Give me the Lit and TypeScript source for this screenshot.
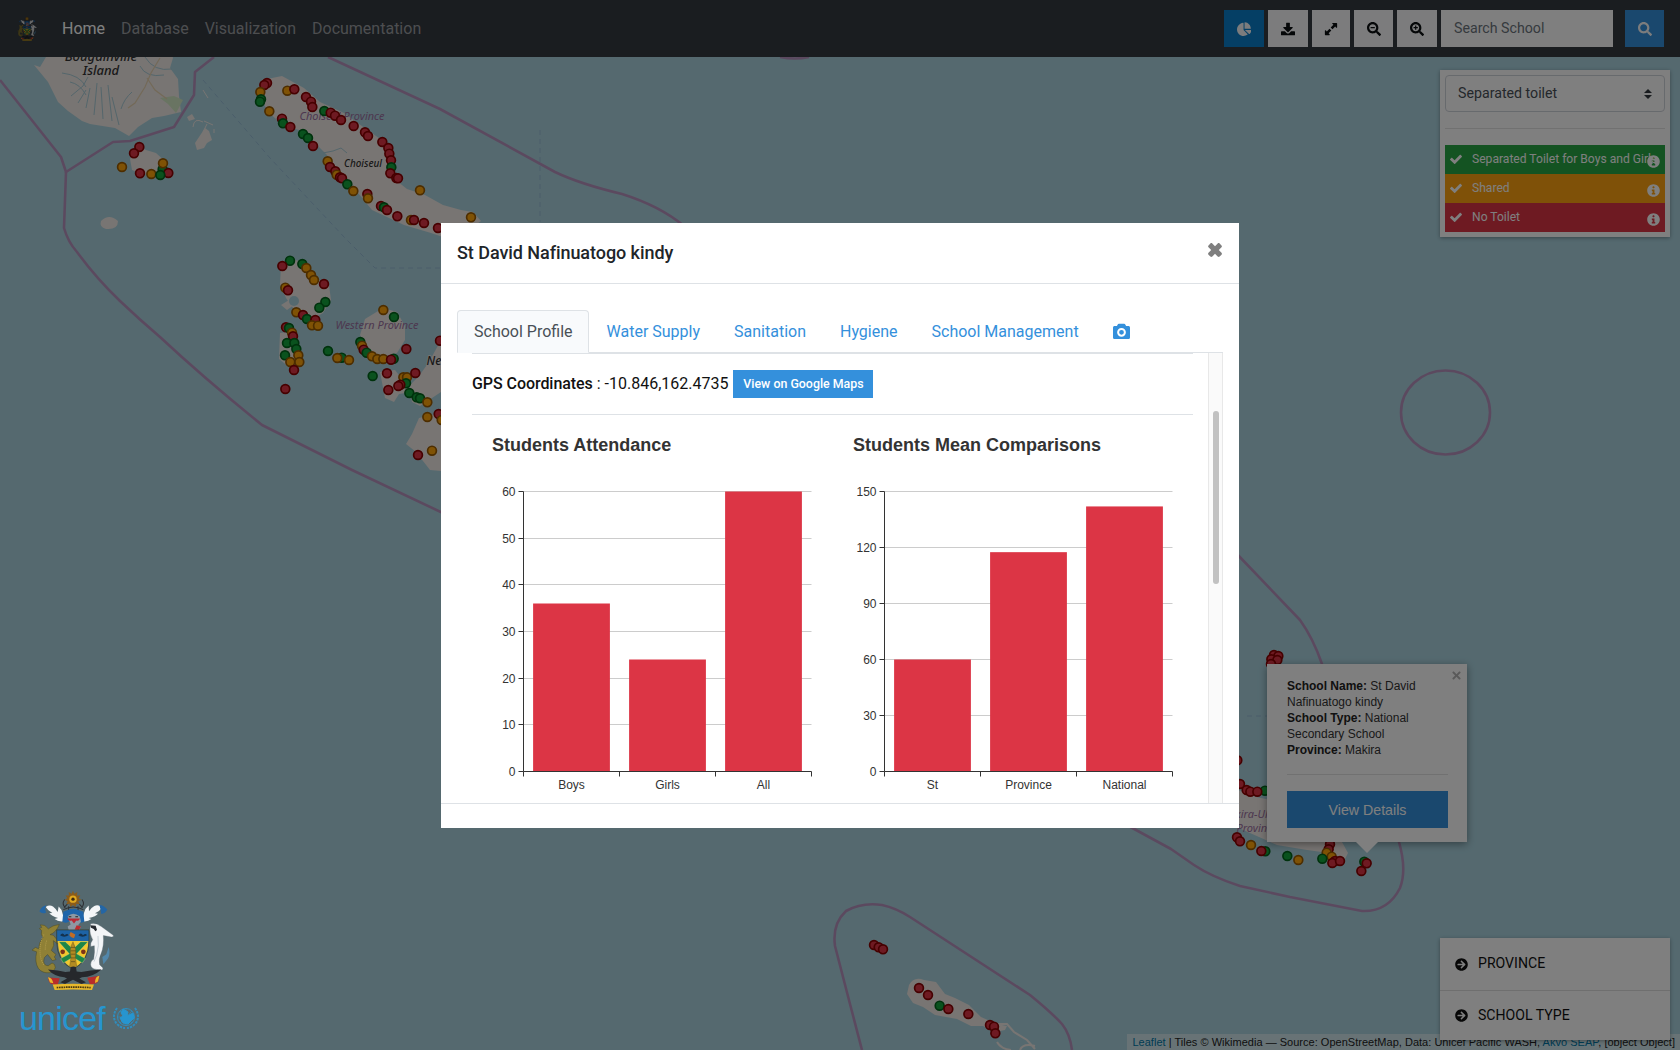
import { LitElement, html, svg, css } from "lit";
import { customElement, property } from "lit/decorators.js";

/* ---------- icons ---------- */
const SEARCH =
  "M505 442.7L405.3 343c-4.5-4.5-10.6-7-17-7H372c27.6-35.3 44-79.7 44-128C416 93.1 322.9 0 208 0S0 93.1 0 208s93.1 208 208 208c48.3 0 92.7-16.4 128-44v16.3c0 6.4 2.5 12.5 7 17l99.7 99.7c9.4 9.4 24.6 9.4 33.9 0l28.3-28.3c9.4-9.4 9.4-24.6.1-34zM208 336c-70.7 0-128-57.2-128-128 0-70.7 57.2-128 128-128 70.7 0 128 57.2 128 128 0 70.7-57.2 128-128 128z";
const ICONS: Record<string, string> = {
  search: SEARCH,
  zoomOut: SEARCH + "M130 186h156v44H130z",
  zoomIn: SEARCH + "M130 186h56v-56h44v56h56v44h-56v56h-44v-56h-56z",
  check:
    "M178 462 L10 294c-12-12-12-30 0-42l44-44c12-12 30-12 42 0L196 306 416 86c12-12 30-12 42 0l44 44c12 12 12 30 0 42L220 462c-12 12-30 12-42 0z",
  info: "M256 8C119.043 8 8 119.083 8 256c0 136.997 111.043 248 248 248s248-111.003 248-248C504 119.083 392.957 8 256 8zm0 80c23.196 0 42 18.804 42 42s-18.804 42-42 42-42-18.804-42-42 18.804-42 42-42zm68 314c0 6.627-5.373 12-12 12h-112c-6.627 0-12-5.373-12-12v-34c0-6.627 5.373-12 12-12h18v-84h-18c-6.627 0-12-5.373-12-12v-34c0-6.627 5.373-12 12-12h82c6.627 0 12 5.373 12 12v130h18c6.627 0 12 5.373 12 12v34z",
  pie: "M512 288H290.5l150 150c6.04 6.04 15.98 6.53 22.19.68 36-34 58-78 65.32-132.86 1.34-9.46-6.51-17.85-16.06-17.85zm-6-52C498 112 408.26 16 288.8 8 279.68 7.4 276 15 276 24V250h214c9.14 0 16.82-5 16-14zM240 288V44c0-9.55-8.39-17.4-17.84-16.06C100 42-4.1 155.6.14 280.37 4.5 408.51 114.83 513.59 243.03 511.98c50.4-.63 96.97-16.87 135.26-44.03 7.9-5.6 20-14 10-24L240 288z",
  download:
    "M204 24h104a16 16 0 0 1 16 16v144h84c18 0 27 21 14 34L274 366c-10 10-26 10-36 0L90 218c-13-13-4-34 14-34h84V40a16 16 0 0 1 16-16zM24 340h118l62 62c29 28 75 28 104 0l62-62h118a24 24 0 0 1 24 24v100a24 24 0 0 1-24 24H24a24 24 0 0 1-24-24V364a24 24 0 0 1 24-24z",
  expand:
    "M320 32h140c12 0 20 8 20 20v140c0 18-20 26-33 14l-38-38-98 98-66-66 98-98-37-37c-12-12-4-33 14-33zM192 480H52c-12 0-20-8-20-20V320c0-18 20-26 33-14l38 38 98-98 66 66-98 98 37 37c12 12 4 33-14 33z",
  arrow:
    "M256 8c137 0 248 111 248 248S393 504 256 504 8 393 8 256 119 8 256 8zm-28.9 143.6l75.5 72.4H120c-13.3 0-24 10.7-24 24v16c0 13.3 10.7 24 24 24h182.6l-75.5 72.4c-9.7 9.3-9.9 24.8-.4 34.3l11 10.9c9.4 9.4 24.6 9.4 33.9 0L404.3 273c9.4-9.4 9.4-24.6 0-33.9L271.6 106.3c-9.4-9.4-24.6-9.4-33.9 0l-11 10.9c-9.5 9.6-9.3 25.1.4 34.4z",
  camera:
    "M512 140v296c0 26.5-21.5 48-48 48H48c-26.5 0-48-21.5-48-48V140c0-26.5 21.5-48 48-48h70l20-42c8-16 22-26 40-26h156c18 0 32 10 40 26l20 42h70c26.500 0 48 21.500 48 48zM388 280a132 132 0 1 0-264 0a132 132 0 1 0 264 0zM328 280a72 72 0 1 1-144 0a72 72 0 1 1 144 0z",
  times:
    "M170 48 256 134 342 48c18-18 44-18 62 0l60 60c18 18 18 44 0 62L378 256l86 86c18 18 18 44 0 62l-60 60c-18 18-44 18-62 0L256 378 170 464c-18 18-44 18-62 0l-60-60c-18-18-18-44 0-62l86-86L48 170c-18-18-18-44 0-62l60-60c18-18 44-18 62 0z",
  timesThin:
    "M110 32 256 178 402 32c14-14 36-14 50 0l28 28c14 14 14 36 0 50L334 256l146 146c14 14 14 36 0 50l-28 28c-14 14-36 14-50 0L256 334 110 480c-14 14-36 14-50 0l-28-28c-14-14-14-36 0-50l146-146L32 110c-14-14-14-36 0-50l28-28c14-14 36-14 50 0z",
};
const icon = (name: string, size: number) => html`<svg
  class="icon" width=${size} height=${size} viewBox="0 0 512 512" fill="currentColor" fill-rule="evenodd"
><path d=${ICONS[name]} /></svg>`;

/* ---------- coat of arms ---------- */
@customElement("coat-of-arms")
class CoatOfArms extends LitElement {
  static styles = css`
    :host { display: block; }
    svg { display: block; width: 100%; height: 100%; }
  `;
  render() {
    return html`<svg viewBox="95 58 252 305" preserveAspectRatio="none">
      <g stroke="#2c2f33" stroke-width="3" fill="none">
        <path d="M196 92q-10 14 2 24M248 92q10 14-2 24M192 122q30-16 60 0M196 134q26-14 52 0M204 106l-10 10M240 106l10 10M208 112v20M236 112v20" />
      </g>
      <path d="M221 66l4 9 9-5-1 10 10 0-5 8 8 5-9 4 4 9-10-1-2 9-8-6-8 6-2-9-10 1 4-9-9-4 8-5-5-8 10 0-1-10 9 5z" fill="#8a5c1c" />
      <circle cx="221" cy="91" r="11" fill="#e0a81e" /><circle cx="221" cy="91" r="5" fill="#3d2b12" />
      <g fill="#f4f6f8">
        <path d="M196 156q-18 4-30-6l10-3q-20-6-26-14l9-1q-14-8-20-18 12-8 22-1 8 6 14 16l3-16q10 8 12 22z" />
        <path d="M246 156q18 4 30-6l-8-3q22-5 28-13l-9-1q14-6 22-18-12-9-24-4-10 5-16 16l-1-17q-11 8-14 22z" />
      </g>
      <path d="M141 109q-14 2-21 18 8 9 20 4l-3-12zM300 108q14 0 24 14-6 12-18 13l-2-12z" fill="#2466a5" />
      <path d="M192 128l22-8h14l24 8 3 30q-16 6-22-2h-22q-8 8-22 2z" fill="#1f65aa" />
      <path d="M205 142q16-16 36 0l4 16-9 10 8 6-4 8h-32l-3-10 9-6z" fill="#8e98a3" />
      <path d="M204 148h38q-4 10-11 6l-7 9-7-9q-9 4-13-6z" fill="#b82934" /><path d="M232 168l13 4-6 10-13-1z" fill="#bd2a2e" />
      <path d="M208 143h8M228 143h8" stroke="#202326" stroke-width="3" />
      <path d="M180 166q-21 2-33 13-10-14-24-12l4 8-7 3 7 6-1 11 5 10q-13 14-13 33l-10-4-10 8 14 5q-7 30 5 49 12 15 33 13 15-3 18-15 0-12-10-14l-11 8q-12 1-14-12-2-13 12-21l14 18 11-3-5-8 5-7-14-12q11-15 6-29l14 10 12-5-3-8-11 1-12-14-10-2q18-6 28-30z" fill="#8f8035" stroke="#4d4a24" stroke-width="1.500" />
      <path d="M134 196q-12 22-12 48 0 26 12 42M142 214q-5 14-4 30" stroke="#b09a4c" stroke-width="3" stroke-dasharray="3 3" fill="none" />
      <path d="M172 182h97v33h-97z" fill="#1d63a6" />
      <path d="M176 215h91q0 58-46 82-45-24-45-82z" fill="#f1c72e" />
      <path d="M172 182h97v33q0 60-48 84-49-24-49-84z" fill="none" stroke="#333a2a" stroke-width="2" />
      <path d="M178 217h20l23 22 23-22h22l-34 36 26 14-9 13-28-17-29 17-8-13 26-14z" fill="#1d8647" stroke="#e9e29a" />
      <path d="M221 217q12 22 7 46l4 26-11 7-10-7 4-26q-7-24 6-46z" fill="#b38b22" stroke="#54451b" />
      <path d="M215 234h13M214 244h15M215 254h13M214 265h15M215 276h12" stroke="#584a1b" stroke-width="2" />
      <circle cx="190" cy="247" r="7" fill="#7c3319" /><circle cx="252" cy="247" r="7" fill="#7c3319" />
      <path d="M182 198q8-10 14 0 8-8 12 0-14 8-26 0zM237 198q8-10 14 0 8-8 12 0-14 8-26 0z" fill="#14324e" />
      <path d="M214 188l14 8-4 11q-10-1-14-10z" fill="#c06c25" />
      <path d="M274 164q18-4 32 8l36 26q2 6-6 5l-24-4q3 30-7 54-8 16-4 32l10 10-2 6-18-2q-16-2-17-14 0-12 9-16 4-24 2-40l-11 2q-2-10 6-20-10-18-8-33z" fill="#f3f5f7" stroke="#59646d" stroke-width="1" />
      <path d="M273 168l16 2 4 12-5 4q-3-8-13-10z" fill="#262a30" />
      <path d="M296 200q4 30-4 56l-8 20" stroke="#b4c0c9" stroke-width="2" fill="none" />
      <path d="M328 233q6 20-2 34l-14 17-3-22 12-8z" fill="#5287aa" />
      <path d="M146 299q32 2 52 8l14-2 2-12q8-5 16 0l2 12 14 2q26-6 60-8-24 22-58 23l-8 4 20 11-14 5-25-12-24 12-14-5 20-11-8-4q-30-2-49-23z" fill="#26282c" />
      <path d="M147 323l34 2-6 20-20-3q-10-9-8-19zM300 318l-36 6 8 20 20-4q10-8 8-22z" fill="#b82d2b" />
      <path d="M146 322q12 0 16 18l-10-2zM300 318q-13 2-13 21l9-4zM160 344q60-5 124 0l-6 16q-58-3-112 0z" fill="#e8b92b" />
      <path d="M172 353q50-3 102 0" stroke="#4a3b12" stroke-width="5" stroke-dasharray="5 2" fill="none" />
    </svg>`;
  }
}

/* ---------- bar chart ---------- */
interface ChartData { title: string; max: number; step: number; bars: { label: string; value: number }[] }

@customElement("bar-chart")
class BarChart extends LitElement {
  static styles = css`
    :host { display: block; width: 360px; }
    svg { display: block; overflow: visible; }
    text { font: 12px "Liberation Sans", Arial, sans-serif; fill: #333; }
    .title { font-size: 18px; font-weight: 700; }
  `;
  @property({ attribute: false }) data!: ChartData;
  render() {
    const { title, max, step, bars } = this.data;
    const left = 51.5, width = 288, base = 356.5, plot = 280, band = width / bars.length;
    const ticks = Array.from({ length: max / step + 1 }, (_, i) => i * step);
    const y = (v: number) => base - (v / max) * plot;
    return html`<svg width="360" height="390" viewBox="0 0 360 390">
      <text class="title" x="20" y="36">${title}</text>
      ${ticks.map((t) => {
        const ty = Math.floor(y(t)) + 0.5;
        return svg`${t ? svg`<line x1=${left} x2=${left + width} y1=${ty} y2=${ty} stroke="#ccc" />` : ""}
          <line x1=${left - 5} x2=${left} y1=${ty} y2=${ty} stroke="#333" />
          <text x=${left - 8} y=${ty + 4} text-anchor="end">${t}</text>`;
      })}
      ${bars.map((b, i) => svg`<rect x=${left + band * (i + 0.1)} width=${band * 0.8} y=${y(b.value)} height=${base - y(b.value)} fill="#dc3545" />
        <text x=${left + band * (i + 0.5)} y="374" text-anchor="middle">${b.label}</text>`)}
      <path d="M${left} ${y(max)}V${base}H${left + width}" fill="none" stroke="#333" />
      ${[0, ...bars.map((_, i) => i + 1)].map((i) => svg`<line x1=${left + band * i} x2=${left + band * i} y1=${base} y2=${base + 5} stroke="#333" />`)}
    </svg>`;
  }
}

/* ---------- map ---------- */
type Dot = [string, number, number];
/* Each cluster keeps dot positions in thirds of a pixel from its origin. */
const CLUSTERS: { x: number; y: number; dots: string }[] = [
  { x: 0, y: 0, dots:
    "r801,249 r793,255 o781,276 g783,298 g780,305 o862,272 r883,268 r918,291 r933,305 r937,321 g973,333 r992,338 r1005,347 r1023,360 r1061,378 r1095,397 r1104,408 r1147,426 r1165,444 r1168,461 r1173,481 g1174,502 r1171,520 r1189,534 r1194,535 o1260,571 o1413,652 o808,334 r846,356 g849,370 r871,381 g909,402 g924,414 r939,438 o983,484 r990,501 r1006,514 o1010,524 r1020,532 r1026,535 g1042,553 o1060,573 r1102,582 o1104,595 r1143,618 g1152,622 r1161,630 r1192,649 o1233,660 r1242,660 r1272,669 r1314,684 r418,441 r402,460 o366,501 g488,508 o489,490 r420,520 o454,522 r505,519 g481,525" },
  { x: 260, y: 240, dots:
    "g90,62 r67,78 g127,72 o139,84 o153,105 o162,120 r192,132 o76,143 r84,151 g196,186 g178,203 o109,217 r129,225 g141,237 r166,240 o156,256 o174,257 r78,262 g87,264 o96,278 r99,289 g81,309 g103,309 g109,327 g75,346 o115,346 o91,366 o118,366 r102,390 r76,447 g204,333 g245,353 o232,354 o267,360 o370,210 g402,231 g301,306 o306,317 r311,329 g320,338 o336,349 o352,357 o370,357 g401,356 r393,359 r439,327 g338,408 r381,400 o430,412 o441,412 g438,430 r421,434 r415,438 r466,399 r385,450 g448,459 g470,472 g480,475 o502,487 o502,531 r540,302 r536,522 o545,540 o516,632 r474,645" },
  { x: 1220, y: 560, dots:
    "r162,285 r175,288 r154,298 r172,300 r153,312 r52,601 r60,672 r80,690 r91,695 g135,692 r112,695 r51,832 r60,844 o93,855 g136,874 r124,873 g202,888 o235,900 r330,853 r326,868 o320,878 o335,890 g307,896 r345,903 r337,909 r360,903 g433,905 r440,910 r424,933" },
  { x: 820, y: 880, dots: "r162,195 r176,202 r189,208 r297,324 r324,345 g359,377 r385,387 r445,402 r510,435 r522,440 r526,460" },
];
const DOTS: Dot[] = CLUSTERS.flatMap((c) =>
  c.dots.split(" ").map((s): Dot => {
    const [a, b] = s.slice(1).split(",").map(Number);
    return [s[0], c.x + a / 3, c.y + b / 3];
  })
);

@customElement("school-map")
class SchoolMap extends LitElement {
  static styles = css`
    :host { display: block; }
    svg { display: block; }
    .land { fill: #f0eae6; }
    .reef { fill: none; stroke: #f0eae6; stroke-width: 2; }
    .border { fill: none; stroke: #b793be; stroke-width: 2.6; stroke-linejoin: round; }
    .route { fill: none; stroke: #8fb1d0; stroke-width: 1; stroke-dasharray: 5 4; opacity: .7; }
    .river { fill: none; stroke: #a9cdd8; stroke-width: 1; }
    .road { fill: none; stroke: #e7d3b0; stroke-width: 1.2; }
    .place { font: italic 500 13px "Noto Sans", "Open Sans", sans-serif; fill: #333; stroke: #f0eae6; stroke-width: 1.5; paint-order: stroke; text-anchor: middle; }
    .small { font-size: 11px; }
    .start { font-size: 12px; text-anchor: start; }
    .region { font: italic 11px "Noto Sans", "Open Sans", sans-serif; fill: #9a6fa0; text-anchor: middle; }
    .dot { stroke-width: 1.7; }
    .r { fill: #dc3545; stroke: #8c0000; }
    .o { fill: #ffa50a; stroke: #9a5b00; }
    .g { fill: #14a53c; stroke: #00641a; }
  `;
  render() {
    return html`<svg width="1680" height="1050" viewBox="0 0 1680 1050">
      <g class="land">
        <path d="M46 57L40 67l-6-2 14 17 10 20 10 9 14 10 8 3 25 4 14 8 9-9 14-9 12-2 17-4-2-16-1-17-8-11 3-10-3-11z" />
        <path d="M192 114l-5 3 2 4 6-2zM201 134l-6 9 2 7 7-2 3-5 5-3-3-9-4-3z" />
        <path d="M138 146l-8 13 2 11 10 4 26 1-1-12-11-10-10-3zM101 221q8-8 17 0 0 9-12 8-7-2-5-8z" />
        <path d="M262 80l-4 12 10 20 16 14 19 5 24 24 9 18 22 20 14 17 32 15 27 8 18 6 18-8 14-10-8-9-12-2-18-5-18-10-18-6-10-8-6-22-5-16-20-14-22-16-24-11-16-14-22-12z" />
        <path d="M288 258l15 4 12 16 14 7 2 15-8 13-14 8-11-6-12-17-6-14 1-19zM281 305l8-5 5 5-7 5z" />
        <path d="M383 308l14 4 8 14v14l-8 13-16 4-15-10-6-12 5-16z" />
        <path d="M380 372l15-2 17 22-13 2-5 8-9-4zM441 340l-12 22-10 14-10 10 3 16 8 4 21-14zM441 413l-22 5-7 16-6 10 10 8 14 18 11 1z" />
        <path d="M280 333l12-2 7 24-10 12-10-8zM335 354l15 1-1 7h-14z" />
        <path d="M1225 785l6 30 10 14 36 16 30 5 22 3 16 6 3-6-12-22-30-24-50-10z" />
        <path d="M909 985q5-9 15-5l12 2 9 12 10 4 14 7 12 12 16 7 10 2-2 4-10 2-12-6-12 0-14-7-22-4-12-8-10-4-6-9z" />
      </g>
      <path class="reef" d="M994 1024h13l7 8 13 8 8 9M997 1042q4 7 14 8M1020 1050q3-7 15-4" />
      <path class="reef" style="stroke-width:1" d="M203 122q-9-5-10 5M204 121l9 4M203 132l4-8M214 129v4M203 90l5 8" />
      <circle cx="294" cy="301" r="5" fill="#aad3df" />
      <path d="M160 98l14-2 9 4-7 13-8-9z" fill="#d2e8c4" />
      <g class="river">
        <path d="M62 73q18 2 24 14M70 82q10 2 16 13M71 96l12-10 5-9M78 103l8-13M86 108l4-20M94 115l3-32M103 119l-2-32M112 121l-4-36M119 125l-7-28M132 92q-8 7-11 17M140 66q6 12 24 9M172 69q-18 3-27-12" />
        <path d="M323 153l10-2 8-3 6 5" />
      </g>
      <path class="road" d="M160 58l-9 15-6 14-10 16-7 5M147 78l8 12 12 9" />
      <g class="border">
        <path d="M0 80L61 157L66 172L113 142L130 141L174 127L194 95L195 72L214 57" />
        <path d="M66 172L64 228Q68 242 77 252Q96 278 120 301Q140 320 160 337Q205 379 262 425L352 470 445 514" />
        <path d="M328 57L440 109 555 172Q580 184 622 194Q660 206 684 226" />
        <path d="M780 57q15 3 29 0" />
        <path d="M1236 553L1300 620Q1313 638 1322 664L1399 842Q1407 870 1400 888Q1388 912 1362 911L1290 897 1240 886Q1212 877 1194 865L1171 849 1125 824" />
        <ellipse cx="1445.5" cy="412.5" rx="44.5" ry="42" />
        <path d="M862 1050L850 1004Q840 965 835 946Q832 924 846 911Q862 902 882 905Q896 908 910 917L1030 995Q1052 1013 1062 1024Q1070 1034 1072 1050" />
      </g>
      <path class="route" d="M203 80L270 158 345 238 375 268H441M540 130V222M1247 716h20" />
      <text class="place" x="101" y="61">Bougainville</text><text class="place" x="101" y="75">Island</text>
      <text class="region" x="342" y="120" textLength="85" lengthAdjust="spacingAndGlyphs">Choiseul Province</text>
      <text class="place small" x="363" y="167" textLength="38" lengthAdjust="spacingAndGlyphs">Choiseul</text>
      <text class="region" x="377" y="328.5" textLength="83" lengthAdjust="spacingAndGlyphs">Western Province</text>
      <text class="place start" x="426.5" y="365">New</text>
      <text class="region" x="1254" y="818">Makira-Ulawa</text><text class="region" x="1257" y="832">Province</text>
      ${DOTS.map(([k, x, y]) => svg`<circle class="dot ${k}" cx=${x} cy=${y} r="4.4" />`)}
    </svg>`;
  }
}

/* ---------- page ---------- */
const CHARTS: ChartData[] = [
  { title: "Students Attendance", max: 60, step: 10, bars: [{ label: "Boys", value: 36 }, { label: "Girls", value: 24 }, { label: "All", value: 60 }] },
  { title: "Students Mean Comparisons", max: 150, step: 30, bars: [{ label: "St", value: 60 }, { label: "Province", value: 117.5 }, { label: "National", value: 142 }] },
];

@customElement("app-root")
class AppRoot extends LitElement {
  static styles = css`
    :host { display: block; position: relative; width: 1680px; height: 1050px; overflow: hidden; background: #aad3df; font: 16px/1.5 Roboto, sans-serif; color: #212529; }
    * { box-sizing: border-box; }
    .icon { display: block; flex: none; }
    school-map { position: absolute; inset: 0; }

    header { position: relative; display: flex; align-items: center; height: 57px; padding: 0 16px; background: #343a40; }
    .crest { width: 20px; height: 25px; margin: 0 25px 0 1px; filter: brightness(.85); }
    nav { display: flex; gap: 16px; flex: 1; padding-top: 1px; color: #9a9da0; }
    nav .active { color: #fff; }
    .tools { display: flex; }
    .tool { display: flex; align-items: center; justify-content: center; width: 39px; height: 37px; margin-right: 4px; background: #f8f9fa; color: #0b0e11; }
    .tool.wide { width: 40px; }
    .tool.slim { width: 38px; }
    .tool.pie { background: #0b7fcb; color: #f8f9fa; }
    .tool.go { background: #3490dc; color: #f8f9fa; margin: 0 0 0 12px; }
    .field { width: 172px; height: 37px; padding: 0 13px; font-size: 14.2px; line-height: 37px; background: #fff; color: #6c757d; }

    .legend { position: absolute; left: 1440px; top: 70px; width: 230px; height: 167px; padding: 5px; background: #fff; box-shadow: 0 1px 4px rgba(0,0,0,.35); }
    .select { display: flex; align-items: center; justify-content: space-between; height: 37px; padding: 0 12px; border: 1px solid #ced4da; border-radius: 4px; font-size: 14.2px; color: #495057; }
    .rule { height: 1px; background: #e2e2e2; }
    .legend .rule { margin: 16px 0; }
    .row { display: flex; align-items: center; height: 29px; padding: 0 5px; font-size: 12.1px; color: #fff; white-space: nowrap; }
    .row .label { flex: 1; width: 0; margin-left: 10px; padding-bottom: 1px; }
    .row .tick { padding-bottom: 2px; }
    .row .info { margin-top: 3px; }
    .green { background: #28a745; }
    .orange { background: #ffa310; }
    .red { background: #dc3545; }

    .filters { position: absolute; left: 1440px; top: 938px; width: 230px; height: 102px; background: #fff; box-shadow: 0 1px 4px rgba(0,0,0,.35); font-size: 14.1px; color: #111; overflow: hidden; }
    .filter { display: flex; align-items: center; gap: 10px; height: 53px; padding: 0 15px; border-bottom: 1px solid #dedede; }
    .filter + .filter { height: 49px; border: 0; }
    .credit { position: absolute; right: 0; bottom: 0; height: 16px; padding: 0 5px; background: rgba(255,255,255,.45); font: 11px/16px "Liberation Sans", Arial, sans-serif; letter-spacing: .02px; color: #222; white-space: nowrap; }
    .credit a { color: #0078a8; }

    .popup { position: absolute; left: 1267px; top: 664px; width: 200px; height: 178px; padding: 14px 19px 14px 20px; background: #fff; box-shadow: 0 2px 8px rgba(0,0,0,.4); font: 12px/16px "Liberation Sans", Arial, sans-serif; color: #333; }
    .popup::after { content: ""; position: absolute; left: 89px; top: 178px; border: 11.5px solid transparent; border-top: 11px solid #fff; border-bottom: 0; }
    .popup .shut { position: absolute; right: 6px; top: 7px; color: #b4b4b4; }
    .popup b { color: #222; }
    .popup .line { display: flex; gap: 3.3px; white-space: nowrap; }
    .popup .rule { margin: 16px 0; }
    .details { height: 37px; background: #3490dc; color: #fff; font-size: 14.2px; line-height: 38px; text-align: center; }

    .backdrop { position: absolute; inset: 0; background: rgba(0,0,0,.5); }

    .brand { position: absolute; left: 19px; top: 888px; }
    .brand coat-of-arms { width: 84px; height: 103px; margin-left: 12px; }
    .unicef { display: flex; align-items: center; gap: 7px; height: 40px; margin-top: 7px; color: #2795cf; font: 34px/40px "Liberation Sans", Arial, sans-serif; letter-spacing: -.8px; }
    .unicef span { width: 86px; }
    .unicef svg { display: block; }

    .modal { position: absolute; left: 441px; top: 223px; width: 798px; height: 605px; display: flex; flex-direction: column; background: #fff; }
    .head { display: flex; justify-content: space-between; height: 61px; padding: 16px; border-bottom: 1px solid #dee2e6; font-size: 18px; font-weight: 500; line-height: 28px; letter-spacing: -.06px; }
    .head .x { margin-top: 3px; color: #7f7f7f; }
    .body { display: flex; flex-direction: column; height: 519px; padding: 26px 16px 0; }
    .tabs { display: flex; height: 43px; border-bottom: 1px solid #dee2e6; color: #3490dc; }
    .tab { display: flex; align-items: center; height: 43px; padding: 0 17px; white-space: nowrap; }
    .tab.on { margin-right: 1px; padding: 0 15px 0 16px; background: #f8fafc; border: 1px solid #dee2e6; border-bottom-color: #f8fafc; border-radius: 4px 4px 0 0; color: #495057; }
    .pane { display: flex; flex: 1; min-height: 0; overflow: hidden; }
    .content { width: 721px; margin-left: 15px; }
    .content .rule { background: #dee2e6; }
    .gps { display: flex; align-items: center; height: 60px; gap: 5px; }
    .gps b { font-weight: 500; letter-spacing: -.06px; }
    .gps .coords { padding-bottom: 1px; color: #111; }
    .maps { width: 140px; height: 28px; background: #3490dc; color: #fff; font-size: 12.4px; line-height: 28px; text-align: center; white-space: nowrap; font-weight: 500; }
    .charts { display: flex; gap: 1px; }
    .bar { width: 14.5px; margin-left: 15px; padding: 58px 2.5px 0 3.5px; background: #fafafa; border: 1px solid #e8e8e8; border-width: 0 1px; }
    .thumb { height: 173px; border-radius: 4px; background: #c1c1c1; }
    .foot { flex: 1; border-top: 1px solid #dee2e6; }
  `;

  render() {
    return html`
      <school-map></school-map>
      <header>
        <coat-of-arms class="crest"></coat-of-arms>
        <nav><span class="active">Home</span><span>Database</span><span>Visualization</span><span>Documentation</span></nav>
        <div class="tools">
          <span class="tool wide pie">${icon("pie", 14)}</span>
          <span class="tool wide">${icon("download", 14)}</span>
          <span class="tool slim">${icon("expand", 14)}</span>
          <span class="tool">${icon("zoomOut", 14)}</span>
          <span class="tool wide">${icon("zoomIn", 14)}</span>
          <span class="field">Search School</span>
          <span class="tool go">${icon("search", 14)}</span>
        </div>
      </header>

      <section class="legend">
        <div class="select">Separated toilet
          <svg width="8" height="10" viewBox="0 0 8 10"><path d="M4 0l4 4H0zM4 10l4-4H0z" fill="#343a40" /></svg>
        </div>
        <div class="rule"></div>
        ${[["green", "Separated Toilet for Boys and Girls"], ["orange", "Shared"], ["red", "No Toilet"]].map(
          ([c, t]) => html`<div class="row ${c}"><span class="tick">${icon("check", 12)}</span><span class="label">${t}</span><span class="info">${icon("info", 13)}</span></div>`
        )}
      </section>

      <div class="popup">
        <span class="shut">${icon("timesThin", 9)}</span>
        <div class="line"><b>School Name:</b><span>St David</span></div>
        <div class="line">Nafinuatogo kindy</div>
        <div class="line"><b>School Type:</b><span>National</span></div>
        <div class="line">Secondary School</div>
        <div class="line"><b>Province:</b><span>Makira</span></div>
        <div class="rule"></div>
        <div class="details">View Details</div>
      </div>

      <div class="credit"><a>Leaflet</a> | Tiles © Wikimedia — Source: OpenStreetMap, Data: Unicef Pacific WASH, <a>Akvo SEAP</a>, [object Object]</div>
      <section class="filters">
        <div class="filter">${icon("arrow", 13)}<span>PROVINCE</span></div>
        <div class="filter">${icon("arrow", 13)}<span>SCHOOL TYPE</span></div>
      </section>

      <div class="backdrop"></div>

      <div class="brand">
        <coat-of-arms></coat-of-arms>
        <div class="unicef"><span>unicef</span>
          <svg width="28" height="26" viewBox="0 0 28 26" fill="none" stroke="#2795cf">
            <circle cx="14" cy="12" r="8.5" stroke-width=".8" /><path d="M8 6q6 5 12 12M14 3.500v17M5.500 12h17M8 18q6-5 12-12" stroke-width=".6" />
            <path d="M11 4l5 3-1 4 6-3 1 5-6 6-5-1-3-5 3-2-2-3z" fill="#2795cf" />
            <path d="M5 3q-6 9 0 16 4 4 8 4M23 3q6 9 0 16-4 4-8 4" stroke-width="2" stroke-dasharray="2.500 1" opacity=".8" />
          </svg>
        </div>
      </div>

      <section class="modal">
        <div class="head"><span>St David Nafinuatogo kindy</span><span class="x">${icon("times", 16)}</span></div>
        <div class="body">
          <div class="tabs">
            <span class="tab on">School Profile</span><span class="tab">Water Supply</span><span class="tab">Sanitation</span>
            <span class="tab">Hygiene</span><span class="tab">School Management</span><span class="tab">${icon("camera", 17)}</span>
          </div>
          <div class="pane">
            <div class="content">
              <div class="rule"></div>
              <div class="gps"><span class="coords"><b>GPS Coordinates</b> : -10.846,162.4735</span><span class="maps">View on Google Maps</span></div>
              <div class="rule"></div>
              <div class="charts">${CHARTS.map((c) => html`<bar-chart .data=${c}></bar-chart>`)}</div>
            </div>
            <div class="bar"><div class="thumb"></div></div>
          </div>
        </div>
        <div class="foot"></div>
      </section>
    `;
  }
}
